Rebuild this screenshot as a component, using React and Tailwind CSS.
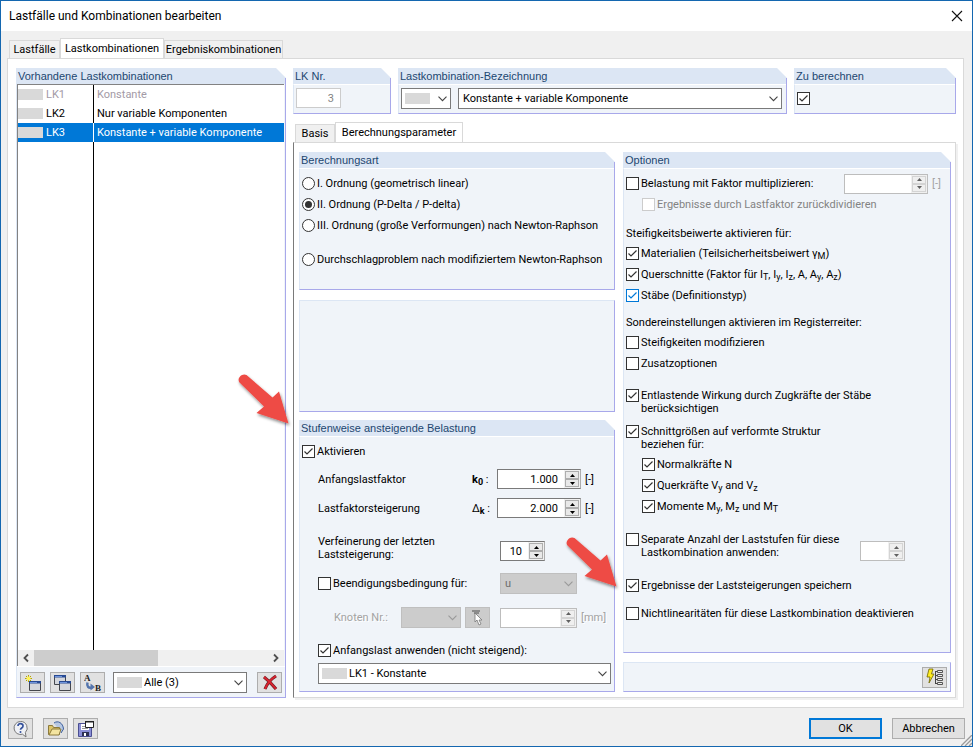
import clsx from "clsx";

const COMBINATIONS = [
  { id: "LK1", name: "Konstante", state: "muted" },
  { id: "LK2", name: "Nur variable Komponenten", state: "normal" },
  { id: "LK3", name: "Konstante + variable Komponente", state: "selected" },
];

function Group({ title, flush, className, bodyClass, children }) {
  return (
    <fieldset className={clsx("relative flex min-w-0 flex-col", className)}>
      {title && (
        <legend className="float-left h-4 w-full bg-[#dce6f4] pl-0.5 font-['Liberation_Sans',sans-serif] leading-4 text-[#1c4670] [clip-path:polygon(0_0,calc(100%-10px)_0,100%_10px,100%_100%,0_100%)]">
          {title}
        </legend>
      )}
      <div
        className={clsx(
          "flex flex-1 flex-col border-r border-b border-l border-r-[#a8a8ea] border-b-[#a8a8ea] border-l-[#dce6f4] bg-[#f0f4f9]",
          !flush && (title ? "border-t border-t-white" : "border-t border-t-[#dce6f4]"),
          bodyClass
        )}
      >
        {children}
      </div>
      {title && <span className="absolute top-2.5 right-0 h-2 w-px bg-[#a8a8ea]" />}
    </fieldset>
  );
}

function Check({ children, label, checked = false, disabled = false, focused = false, tall = false, className }) {
  return (
    <label
      className={clsx(
        "flex gap-0.5",
        tall ? "items-start" : "h-[21px] items-center",
        disabled ? "text-[#838383]" : "text-black",
        className
      )}
    >
      <span className="relative flex size-[13px] shrink-0">
        <input
          type="checkbox"
          aria-label={label}
          defaultChecked={checked}
          disabled={disabled}
          className={clsx(
            "peer size-[13px] appearance-none border bg-white",
            disabled ? "border-[#cccccc]" : focused ? "border-[#0078d7]" : "border-[#333333]"
          )}
        />
        <svg
          viewBox="0 0 13 13"
          className={clsx(
            "pointer-events-none absolute inset-0 hidden peer-checked:block",
            focused ? "text-[#0078d7]" : "text-[#333333]"
          )}
        >
          <path d="M2.500 6.500 5 9 10.500 3.500" fill="none" stroke="currentColor" strokeWidth="1.200" />
        </svg>
      </span>
      {children && <span>{children}</span>}
    </label>
  );
}

function Radio({ children, checked, className }) {
  return (
    <label className={clsx("flex h-[21px] items-center gap-0.5 whitespace-nowrap", className)}>
      <span className="relative flex size-[13px] shrink-0">
        <input
          type="radio"
          name="berechnungsart"
          defaultChecked={checked}
          className="peer size-[13px] appearance-none rounded-full border border-[#333333] bg-white"
        />
        <span className="pointer-events-none absolute inset-[3px] hidden rounded-full bg-[#333333] peer-checked:block" />
      </span>
      <span>{children}</span>
    </label>
  );
}

function Select({ label, value, swatch, disabled, className }) {
  return (
    <span className={clsx("relative flex h-[21px]", className)}>
      <select
        aria-label={label}
        disabled={disabled}
        className={clsx(
          "w-full appearance-none border opacity-100",
          disabled ? "border-[#bfbfbf] bg-[#cccccc] text-[#6d6d6d]" : "border-[#7a7a7a] bg-white text-black",
          swatch ? "pl-[30px]" : "pl-1"
        )}
      >
        <option>{value}</option>
      </select>
      {swatch && <span className="pointer-events-none absolute top-[5px] left-1 h-[11px] w-[25px] bg-[#d9d9d9]" />}
      <svg
        viewBox="0 0 9 6"
        className={clsx(
          "pointer-events-none absolute top-2 right-1 h-1.5 w-[9px]",
          disabled ? "text-[#9a9a9a]" : "text-[#444444]"
        )}
      >
        <path d="M.5.7 4.500 4.700 8.500.7" fill="none" stroke="currentColor" strokeWidth="1.100" />
      </svg>
    </span>
  );
}

function Spin({ label, value = "", disabled, className }) {
  const btn = clsx(
    "flex h-2 w-3.5 items-center justify-center border",
    disabled ? "border-[#d4d4d4] bg-[#efefef] text-[#606060]" : "border-[#adadad] bg-[#e9e9e9] text-black"
  );
  return (
    <span
      className={clsx("flex h-5 border", disabled ? "border-[#bdbdbd]" : "border-[#7a7a7a] border-r-[#adadad]", className)}
    >
      <input
        type="text"
        aria-label={label}
        defaultValue={value}
        disabled={disabled}
        className="w-0 min-w-0 flex-1 bg-white pr-1.5 text-right"
      />
      <span className="flex w-4 flex-col items-center justify-between bg-[#f0f0f0] py-px">
        <button type="button" aria-label="Erhöhen" disabled={disabled} className={btn}>
          <svg viewBox="0 0 5 3" className="h-[3px] w-[5px]">
            <path d="M0 3 2.500 0 5 3z" fill="currentColor" />
          </svg>
        </button>
        <button type="button" aria-label="Verringern" disabled={disabled} className={btn}>
          <svg viewBox="0 0 5 3" className="h-[3px] w-[5px]">
            <path d="M0 0h5L2.500 3z" fill="currentColor" />
          </svg>
        </button>
      </span>
    </span>
  );
}

function IconButton({ label, disabled, children }) {
  return (
    <button
      type="button"
      aria-label={label}
      disabled={disabled}
      className={clsx(
        "flex h-[21px] w-[25px] shrink-0 items-center justify-center border",
        disabled ? "border-[#bfbfbf] bg-[#cccccc]" : "border-[#adadad] bg-[#e1e1e1]"
      )}
    >
      <svg viewBox="0 0 18 18" className="size-[18px]" fill="none">
        {children}
      </svg>
    </button>
  );
}

function MiniWindow({ x, y }) {
  return (
    <g transform={`translate(${x} ${y})`}>
      <path d="M.5.5h11v9H.5z" fill="#d3d6dc" stroke="#44474d" />
      <path d="M0 0h12v2.500H0z" fill="#274a94" />
      <path d="M1 1h7v1H1z" fill="#6f95dd" />
    </g>
  );
}

function Pointer({ id, className }) {
  return (
    <svg viewBox="0 0 60 60" className={clsx("pointer-events-none absolute z-10 size-[60px]", className)}>
      <defs>
        <filter id={id} x="-20%" y="-20%" width="150%" height="150%">
          <feDropShadow dx="1" dy="2" stdDeviation="1.5" floodColor="#000" floodOpacity="0.45" />
        </filter>
      </defs>
      <path
        d="M3.500 10.500C.5 7 5.500.5 10.500 3L36.500 25.500 43 19.500 52.500 51.500 20.500 41 28 34.500Z"
        fill="#ee4b45"
        filter={`url(#${id})`}
      />
    </svg>
  );
}

function CombinationList() {
  return (
    <Group title="Vorhandene Lastkombinationen" flush className="w-[270px] shrink-0">
      <div className="mr-px flex flex-1 flex-col border-t border-l border-[#828282] bg-white">
        <table className="w-full border-separate border-spacing-0">
          <tbody>
            {COMBINATIONS.map((c) => (
              <tr
                key={c.id}
                className={clsx(
                  "h-[19px]",
                  c.state === "selected" && "bg-[#0078d7] text-white",
                  c.state === "muted" && "text-[#a39aa6]"
                )}
              >
                <td className={clsx("w-[76px] border-r p-0", c.state === "selected" ? "border-white" : "border-black")}>
                  <span className="flex items-center gap-[3px]">
                    <span className="h-[11px] w-[25px] bg-[#d9d9d9]" />
                    {c.id}
                  </span>
                </td>
                <td className="p-0 pl-[3px]">{c.name}</td>
              </tr>
            ))}
          </tbody>
        </table>
        <div className="w-[76px] flex-1 border-r border-black" />
        <div className="flex h-4 items-center bg-[#f0f0f0]">
          <svg viewBox="0 0 16 16" className="size-4">
            <path d="M10 4.500 6.500 8 10 11.500" fill="none" stroke="#505050" strokeWidth="1.800" />
          </svg>
          <div className="h-full flex-1">
            <div className="h-full w-[53%] bg-[#cdcdcd]" />
          </div>
          <svg viewBox="0 0 16 16" className="size-4">
            <path d="M6 4.500 9.500 8 6 11.500" fill="none" stroke="#505050" strokeWidth="1.800" />
          </svg>
        </div>
      </div>
      <div className="flex items-center gap-[5px] border-t border-white px-[3px] pt-[5px] pb-1">
        <IconButton label="Neu">
          <MiniWindow x={5} y={7} />
          <path d="M4.500 1v7M1 4.500h7M2 2l5 5M7 2 2 7" stroke="#b5a400" />
          <circle cx="4.500" cy="4.500" r="2" fill="#fff35a" />
        </IconButton>
        <IconButton label="Kopieren">
          <MiniWindow x={0} y={1} />
          <MiniWindow x={5} y={7} />
        </IconButton>
        <IconButton label="Umnummerieren">
          <text x="0" y="7" fontSize="9" fontWeight="bold" fontFamily="Liberation Serif" fill="#222">A</text>
          <text x="11" y="17" fontSize="9" fontWeight="bold" fontFamily="Liberation Serif" fill="#222">B</text>
          <path d="M3.500 8.500c-1 4 1 6 4.500 5" stroke="#5475ad" strokeWidth="2.500" />
          <path d="m6.500 9.500 4.500 3.500-4.500 3.500z" fill="#5475ad" />
        </IconButton>
        <Select label="Filter" value="Alle (3)" swatch className="ml-[3px] flex-1" />
        <span className="ml-[5px] flex">
          <IconButton label="Löschen">
            <path d="M3 3c4 3 8 7 12 12M15 2C10 5 6 10 4 15" stroke="#6b2026" strokeWidth="3.200" />
            <path d="M3 3c4 3 8 7 12 12M15 2C10 5 6 10 4 15" stroke="#d9232e" strokeWidth="1.900" />
          </IconButton>
        </span>
      </div>
    </Group>
  );
}

function LoadIncrements() {
  return (
    <Group title="Stufenweise ansteigende Belastung" className="mt-2 flex-1" bodyClass="pt-1 pr-[3px] pb-[7px] pl-0.5">
      <Pointer id="shadow-a" className="-top-12 -left-[63px]" />
      <Check checked>Aktivieren</Check>
      <div className="flex flex-col pl-4">
        <div className="mt-[7px] flex h-5 items-center">
          <span className="flex-1">Anfangslastfaktor</span>
          <span className="w-[25px]"><b>k<sub>0</sub></b> :</span>
          <Spin label="Anfangslastfaktor k0" value="1.000" className="w-[84px]" />
          <span className="w-[30px] pl-1">[-]</span>
        </div>
        <div className="mt-[9px] flex h-5 items-center">
          <span className="flex-1">Lastfaktorsteigerung</span>
          <span className="w-[25px]">Δ<b><sub>k</sub></b> :</span>
          <Spin label="Lastfaktorsteigerung" value="2.000" className="w-[84px]" />
          <span className="w-[30px] pl-1">[-]</span>
        </div>
        <div className="mt-[17px] flex items-start pr-[66px]">
          <span className="flex-1">Verfeinerung der letzten<br />Laststeigerung:</span>
          <Spin label="Verfeinerung" value="10" className="mt-1.5 w-[45px]" />
        </div>
        <div className="mt-3 flex items-center justify-between pr-[34px]">
          <Check>Beendigungsbedingung für:</Check>
          <Select label="Beendigungsbedingung" value="u" disabled className="w-[77px]" />
        </div>
        <div className="mt-[13px] flex h-[21px] items-center text-[#a3a3a3] [text-shadow:1px_1px_0_#fff]">
          <span className="flex-1 pl-4">Knoten Nr.:</span>
          <Select label="Knoten Nr." value="" disabled className="w-[60px]" />
          <span className="ml-1 flex">
            <IconButton label="Knoten wählen" disabled>
              <path d="M3 2h8M5 4h5" stroke="#777" strokeWidth="1.500" />
              <path d="M6 4v9l2-2 2 5 2-1-2-4h3z" fill="#fff" stroke="#777" strokeWidth=".8" />
            </IconButton>
          </span>
          <Spin label="Verschiebung" disabled className="ml-2.5 w-[77px]" />
          <span className="w-[34px] pl-1">[mm]</span>
        </div>
        <Check checked className="mt-3">Anfangslast anwenden (nicht steigend):</Check>
        <Select label="Anfangslast" value="LK1 - Konstante" swatch className="mt-0.5" />
      </div>
    </Group>
  );
}

function Options() {
  return (
    <Group title="Optionen" bodyClass="pt-1 pb-7 pl-0.5">
      <div className="flex items-center justify-between pr-[6px]">
        <Check>Belastung mit Faktor multiplizieren:</Check>
        <span className="flex items-center">
          <Spin label="Faktor" disabled className="w-[84px]" />
          <span className="w-4 pl-1 text-[#a3a3a3]">[-]</span>
        </span>
      </div>
      <Check disabled className="pl-4">Ergebnisse durch Lastfaktor zurückdividieren</Check>

      <div className="mt-[9px] leading-[19px]">Steifigkeitsbeiwerte aktivieren für:</div>
      <Check checked>Materialien (Teilsicherheitsbeiwert γ<sub>M</sub>)</Check>
      <Check checked>
        Querschnitte (Faktor für I<sub>T</sub>, I<sub>y</sub>, I<sub>z</sub>, A, A<sub>y</sub>, A<sub>z</sub>)
      </Check>
      <Check checked focused>Stäbe (Definitionstyp)</Check>

      <div className="mt-[7px] leading-[19px]">Sondereinstellungen aktivieren im Registerreiter:</div>
      <Check>Steifigkeiten modifizieren</Check>
      <Check>Zusatzoptionen</Check>

      <Check checked tall className="mt-[15px]">
        Entlastende Wirkung durch Zugkräfte der Stäbe<br />berücksichtigen
      </Check>
      <Check checked tall className="mt-2.5">
        Schnittgrößen auf verformte Struktur<br />beziehen für:
      </Check>
      <div className="mt-[3px] pl-4">
        <Check checked>Normalkräfte N</Check>
        <Check checked>Querkräfte V<sub>y</sub> and V<sub>z</sub></Check>
        <Check checked>Momente M<sub>y</sub>, M<sub>z</sub> und M<sub>T</sub></Check>
      </div>
      <div className="mt-4 flex h-[26px] items-start justify-between pr-[45px]">
        <Check tall>Separate Anzahl der Laststufen für diese<br />Lastkombination anwenden:</Check>
        <span className="flex pt-2">
          <Spin label="Anzahl der Laststufen" disabled className="w-[45px]" />
        </span>
      </div>
      <div className="relative mt-4">
        <Pointer id="shadow-b" className="-top-10 -left-[62px]" />
        <Check checked>Ergebnisse der Laststeigerungen speichern</Check>
      </div>
      <Check className="mt-[7px]">Nichtlinearitäten für diese Lastkombination deaktivieren</Check>
    </Group>
  );
}

function Tab({ active, className, children }) {
  return (
    <button
      type="button"
      role="tab"
      aria-selected={!!active}
      className={clsx(
        "border border-b-0 border-[#d9d9d9] whitespace-nowrap",
        active ? "-mb-px h-[21px] bg-white pb-px" : "h-[18px] bg-[#f0f0f0]",
        className
      )}
    >
      {children}
    </button>
  );
}

export default function App() {
  return (
    <div className="relative flex min-h-screen w-full flex-col border border-[#1467b0] bg-[#f0f0f0] font-[Roboto,sans-serif] text-[11px] leading-[13px] text-black [&_sub]:text-[9px]">
      <header className="flex h-[30px] items-center justify-between bg-white pr-[9px] pl-2">
        <h1 className="text-xs">Lastfälle und Kombinationen bearbeiten</h1>
        <button type="button" aria-label="Schließen">
          <svg viewBox="0 0 12 12" className="size-3">
            <path d="m1 1 10 10M11 1 1 11" stroke="#111" strokeWidth="1.100" />
          </svg>
        </button>
      </header>

      <main className="flex flex-1 flex-col pt-[7px] pr-2 pl-1.5">
        <div role="tablist" className="flex items-end pl-0.5">
          <Tab className="w-[51px]">Lastfälle</Tab>
          <Tab active className="w-[104px]">Lastkombinationen</Tab>
          <Tab className="w-[119px]">Ergebniskombinationen</Tab>
        </div>
        <div className="flex flex-1 gap-[7px] border border-[#d9d9d9] bg-white pt-[9px] pr-[7px] pb-[9px] pl-2">
          <CombinationList />

          <div className="flex min-w-0 flex-1 flex-col">
            <div className="flex gap-[7px]">
              <Group title="LK Nr." className="w-[98px]" bodyClass="min-h-[30px] pt-[3px] pl-0.5">
                <input
                  aria-label="LK Nr."
                  disabled
                  defaultValue="3"
                  className="h-5 w-[45px] border border-[#cccccc] bg-white pr-1.5 text-right text-[#838383]"
                />
              </Group>
              <Group title="Lastkombination-Bezeichnung" className="flex-1" bodyClass="min-h-[30px] pt-[3px] pr-1 pl-0.5">
                <div className="flex gap-[7px]">
                  <Select label="Farbe" value="" swatch className="w-[50px]" />
                  <Select label="Bezeichnung" value="Konstante + variable Komponente" className="flex-1" />
                </div>
              </Group>
              <Group title="Zu berechnen" className="w-[162px]" bodyClass="min-h-[30px] pt-[3px] pl-0.5">
                <Check checked label="Zu berechnen" />
              </Group>
            </div>

            <div role="tablist" className="mt-2 flex items-end pl-0.5">
              <Tab className="w-10">Basis</Tab>
              <Tab active className="w-32">Berechnungsparameter</Tab>
            </div>
            <div className="grid flex-1 grid-cols-[316fr_328fr] gap-2 border border-[#d9d9d9] border-l-[#7a7a7a] pt-[9px] pr-1 pb-[5px] pl-[5px] shadow-[2px_2px_0_#f0f0f0]">
              <div className="flex flex-col">
                <Group title="Berechnungsart" bodyClass="pt-1 pb-[19px] pl-0.5">
                  <Radio>I. Ordnung (geometrisch linear)</Radio>
                  <Radio checked>II. Ordnung (P-Delta / P-delta)</Radio>
                  <Radio>III. Ordnung (große Verformungen) nach Newton-Raphson</Radio>
                  <Radio className="mt-[13px]">Durchschlagproblem nach modifiziertem Newton-Raphson</Radio>
                </Group>
                <Group className="mt-2.5" bodyClass="min-h-28" />
                <LoadIncrements />
              </div>
              <div className="flex flex-col gap-[9px]">
                <Options />
                <Group className="flex-1" bodyClass="items-end justify-center pr-[3px]">
                  <IconButton label="Berechnungsdetails">
                    <path d="M3 1h4L5.500 6H8L3 15l1-6H1z" fill="#ffec1f" stroke="#6d6500" strokeWidth=".8" />
                    <path d="M9.500 3v13M9.500 3.500h2M9.500 7.500h2M9.500 11.500h2M9.500 15.500h2" stroke="#444" />
                    <path d="M11.500 2.500h5v2h-5zM11.500 6.500h5v2h-5zM11.500 10.500h5v2h-5zM11.500 14.500h5v2h-5z" fill="#eee" stroke="#555" />
                  </IconButton>
                </Group>
              </div>
            </div>
          </div>
        </div>
      </main>

      <footer className="flex items-center px-[7px] pt-2.5 pb-[7px]">
        <div className="flex flex-1 gap-[5px]">
          <span className="mr-[5px] flex">
            <IconButton label="Hilfe">
              <path d="M8.500 1.500a6.500 6.500 0 1 0 2 12.700L14 17l-.6-4.500A6.500 6.500 0 0 0 8.500 1.500z" fill="#eff1f6" stroke="#777" />
              <path d="M6 6c0-3.400 5.200-3 5 0C11 8 8.500 8 8.500 9.800" stroke="#34519c" strokeWidth="1.700" />
              <circle cx="8.500" cy="12" r="1" fill="#34519c" />
            </IconButton>
          </span>
          <IconButton label="Öffnen">
            <path d="M7 3c4-3 9 0 9.500 6L14 13" fill="#b7c8e2" stroke="#3c5e9c" />
            <path d="M1.500 14.500V5.500h4l1 2h6v7z" fill="#dcc468" stroke="#8c7a3c" />
            <path d="m2 15 3-6h9l-2 6z" fill="#f3e4a0" stroke="#8c7a3c" />
          </IconButton>
          <IconButton label="Speichern">
            <path d="M1.500 3.500h13v13h-13z" fill="#8b8fd6" stroke="#4a4e92" />
            <path d="M4 4h8v6H4z" fill="#fff" />
            <path d="M5 6.500h6M5 8.500h6" stroke="#999" />
            <path d="M5 12h7v4H5z" fill="#2c3052" />
            <path d="M7 13h2v3H7z" fill="#fff" />
            <path d="M8.500 1.500h8v6h-8z" fill="#fff" stroke="#222" />
            <path d="M8 1h9v1.500H8z" fill="#222" />
          </IconButton>
        </div>
        <div className="flex gap-2.5">
          <button type="button" className="h-[21px] w-[73px] border-2 border-[#0078d7] bg-[#e1e1e1]">OK</button>
          <button type="button" className="h-[21px] w-[73px] border border-[#adadad] bg-[#e1e1e1]">Abbrechen</button>
        </div>
      </footer>
      <svg viewBox="0 0 11 11" className="absolute right-0 bottom-0 size-[11px]">
        <path d="M0 11 11 0M4 11l7-7M8 11l3-3" stroke="#9a9a9a" strokeWidth="1.300" />
      </svg>
    </div>
  );
}
